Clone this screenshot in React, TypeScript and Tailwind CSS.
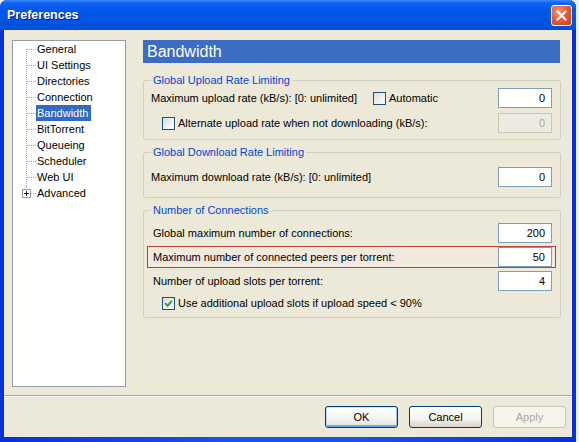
import React from "react";

const treeItems = [
  "General",
  "UI Settings",
  "Directories",
  "Connection",
  "Bandwidth",
  "BitTorrent",
  "Queueing",
  "Scheduler",
  "Web UI",
  "Advanced",
];

function TreeGutter({ first, last }: { first?: boolean; last?: boolean }) {
  const dot = { stroke: "#A0A0A0", strokeDasharray: "1 1", strokeWidth: 1 };
  if (last) {
    return (
      <svg width="23" height="16" viewBox="0 0 23 16" className="shrink-0">
        <line x1="13.5" y1="0" x2="13.5" y2="4" {...dot} />
        <rect x="9.5" y="4.5" width="8" height="8" fill="#fff" stroke="#919B9C" />
        <line x1="11" y1="8.5" x2="16" y2="8.5" stroke="#1E1E1E" />
        <line x1="13.5" y1="6" x2="13.5" y2="11" stroke="#1E1E1E" />
        <line x1="18" y1="8.5" x2="23" y2="8.5" {...dot} />
      </svg>
    );
  }
  return (
    <svg width="23" height="16" viewBox="0 0 23 16" className="shrink-0">
      <line x1="13.5" y1={first ? 8 : 0} x2="13.5" y2="16" {...dot} />
      <line x1="14" y1="8.5" x2="23" y2="8.5" {...dot} />
    </svg>
  );
}

function Check({ checked }: { checked?: boolean }) {
  return (
    <span className="w-[13px] h-[13px] shrink-0 border border-[#1C5180] bg-[linear-gradient(135deg,#DCDCD7,#FFFFFF)] flex items-center justify-center">
      {checked && (
        <svg width="9" height="9" viewBox="0 0 9 9">
          <path d="M1.2 4.2 L3.6 6.8 L7.8 1.8" stroke="#21A121" strokeWidth="1.8" fill="none" />
        </svg>
      )}
    </span>
  );
}

function Field({ value, disabled }: { value: string; disabled?: boolean }) {
  return (
    <div
      className={
        disabled
          ? "ml-auto w-[54px] h-[20px] shrink-0 border border-[#C9C7BA] bg-[#EBEBE4] text-[#ACA899] flex items-center justify-end pr-[6px]"
          : "ml-auto w-[54px] h-[20px] shrink-0 border border-[#7F9DB9] bg-white text-black flex items-center justify-end pr-[6px]"
      }
    >
      {value}
    </div>
  );
}

function Group({
  title,
  padLeft,
  children,
}: {
  title: string;
  padLeft: string;
  children: React.ReactNode;
}) {
  return (
    <div className="border border-[#D0D0BF] rounded-[3px]">
      <div className="-mt-[7px] pl-[7px] h-[13px] leading-[13px]">
        <span className="bg-[#ECE9D8] px-[2px] text-[#0046D5]">{title}</span>
      </div>
      <div className={padLeft}>{children}</div>
    </div>
  );
}

function Button({ label, kind }: { label: string; kind: "default" | "normal" | "disabled" }) {
  const cls =
    kind === "disabled"
      ? "border-[#C9C7BA] bg-[#F5F4EA] text-[#ACA899]"
      : kind === "default"
        ? "border-[#003C74] bg-[linear-gradient(180deg,#FFFFFF_0%,#F3F3EF_60%,#E2DFD6_100%)] text-black shadow-[inset_0_1px_0_#CEE7FF,inset_1px_0_0_#BCD6F6,inset_-1px_0_0_#9CC0EE,inset_0_-2px_0_#69A9EE]"
        : "border-[#003C74] bg-[linear-gradient(180deg,#FFFFFF_0%,#F3F3EF_60%,#D8D2C6_100%)] text-black";
  return (
    <div className={"w-[73px] h-[22px] border rounded-[3px] flex items-center justify-center " + cls}>
      {label}
    </div>
  );
}

export default function App() {
  return (
    <div className="w-[579px] h-[442px] bg-[#E9EEF6] flex font-['Liberation_Sans',Arial,sans-serif] text-[11px] text-black overflow-hidden">
      <div className="w-[576px] h-[442px] flex flex-col rounded-t-[7px] overflow-hidden bg-[linear-gradient(90deg,#0831D9_0%,#1654E6_40%,#1654E6_60%,#0831D9_100%)]">
        {/* title bar */}
        <div className="h-[30px] shrink-0 flex items-center pl-[7px] pr-[4px] bg-[linear-gradient(180deg,#3D8BFF_0%,#0F63F2_10%,#0058E8_35%,#0054E3_70%,#0052DD_90%,#0A4AD0_100%)]">
          <span className="text-white font-bold text-[12.5px] [text-shadow:1px_1px_0_#0A1883]">
            Preferences
          </span>
          <div className="ml-auto w-[21px] h-[21px] rounded-[3px] border border-white bg-[radial-gradient(circle_at_35%_30%,#F09478_0%,#E0613D_45%,#C63F1A_100%)] flex items-center justify-center">
            <svg width="11" height="11" viewBox="0 0 11 11">
              <path d="M1.5 1.5 L9.5 9.5 M9.5 1.5 L1.5 9.5" stroke="#fff" strokeWidth="2" strokeLinecap="square" />
            </svg>
          </div>
        </div>

        {/* body */}
        <div className="h-[407px] mx-[4px] bg-[#ECE9D8] flex flex-col pt-[10px]">
          <div className="h-[347px] flex pl-[8px] gap-[17px]">
            {/* tree */}
            <div className="w-[114px] h-full border border-[#939CA8] bg-white flex flex-col">
              {treeItems.map((item, i) => (
                <div key={item} className="h-[16px] flex items-center">
                  <TreeGutter first={i === 0} last={i === treeItems.length - 1} />
                  <span
                    className={
                      item === "Bandwidth"
                        ? "h-[16px] leading-[16px] pl-[1px] pr-[3px] bg-[#316AC5] text-white"
                        : "h-[16px] leading-[16px] pl-[1px] pr-[3px]"
                    }
                  >
                    {item}
                  </span>
                </div>
              ))}
            </div>

            {/* page */}
            <div className="w-[418px] flex flex-col">
              <div className="h-[23px] w-[417px] bg-[#3D6CC4] text-white text-[16px] leading-[23px] pl-[4px]">
                Bandwidth
              </div>

              <div className="mt-[17px]">
                <Group title="Global Upload Rate Limiting" padLeft="pl-[7px] pr-[8px] pb-[6px]">
                  <div className="mt-[1px] h-[20px] flex items-center">
                    <span className="w-[222px] shrink-0">Maximum upload rate (kB/s): [0: unlimited]</span>
                    <Check />
                    <span className="ml-[3px]">Automatic</span>
                    <Field value="0" />
                  </div>
                  <div className="mt-[5px] h-[20px] flex items-center">
                    <span className="ml-[11px]">
                      <Check />
                    </span>
                    <span className="ml-[3px]">Alternate upload rate when not downloading (kB/s):</span>
                    <Field value="0" disabled />
                  </div>
                </Group>
              </div>

              <div className="mt-[12px]">
                <Group title="Global Download Rate Limiting" padLeft="pl-[7px] pr-[8px] pb-[10px]">
                  <div className="mt-[8px] h-[20px] flex items-center">
                    <span>Maximum download rate (kB/s): [0: unlimited]</span>
                    <Field value="0" />
                  </div>
                </Group>
              </div>

              <div className="mt-[12px]">
                <Group title="Number of Connections" padLeft="pl-[9px] pr-[8px] pb-[7px]">
                  <div className="mt-[6px] h-[20px] flex items-center">
                    <span>Global maximum number of connections:</span>
                    <Field value="200" />
                  </div>
                  <div className="mt-[3px] -ml-[6px] -mr-[4px] pl-[5px] pr-[3px] border border-[#B5433A] bg-[#F1E8DE] flex items-center">
                    <span>Maximum number of connected peers per torrent:</span>
                    <Field value="50" />
                  </div>
                  <div className="mt-[3px] h-[20px] flex items-center">
                    <span>Number of upload slots per torrent:</span>
                    <Field value="4" />
                  </div>
                  <div className="mt-[6px] h-[13px] flex items-center">
                    <span className="ml-[9px]">
                      <Check checked />
                    </span>
                    <span className="ml-[3px]">Use additional upload slots if upload speed &lt; 90%</span>
                  </div>
                </Group>
              </div>
            </div>
          </div>

          {/* separator */}
          <div className="mt-[8px] h-[2px] border-t border-[#ACA899] border-b border-b-white" />

          {/* buttons */}
          <div className="mt-[9px] flex justify-end gap-[11px] pr-[6px]">
            <Button label="OK" kind="default" />
            <Button label="Cancel" kind="normal" />
            <Button label="Apply" kind="disabled" />
          </div>
        </div>
      </div>
    </div>
  );
}
